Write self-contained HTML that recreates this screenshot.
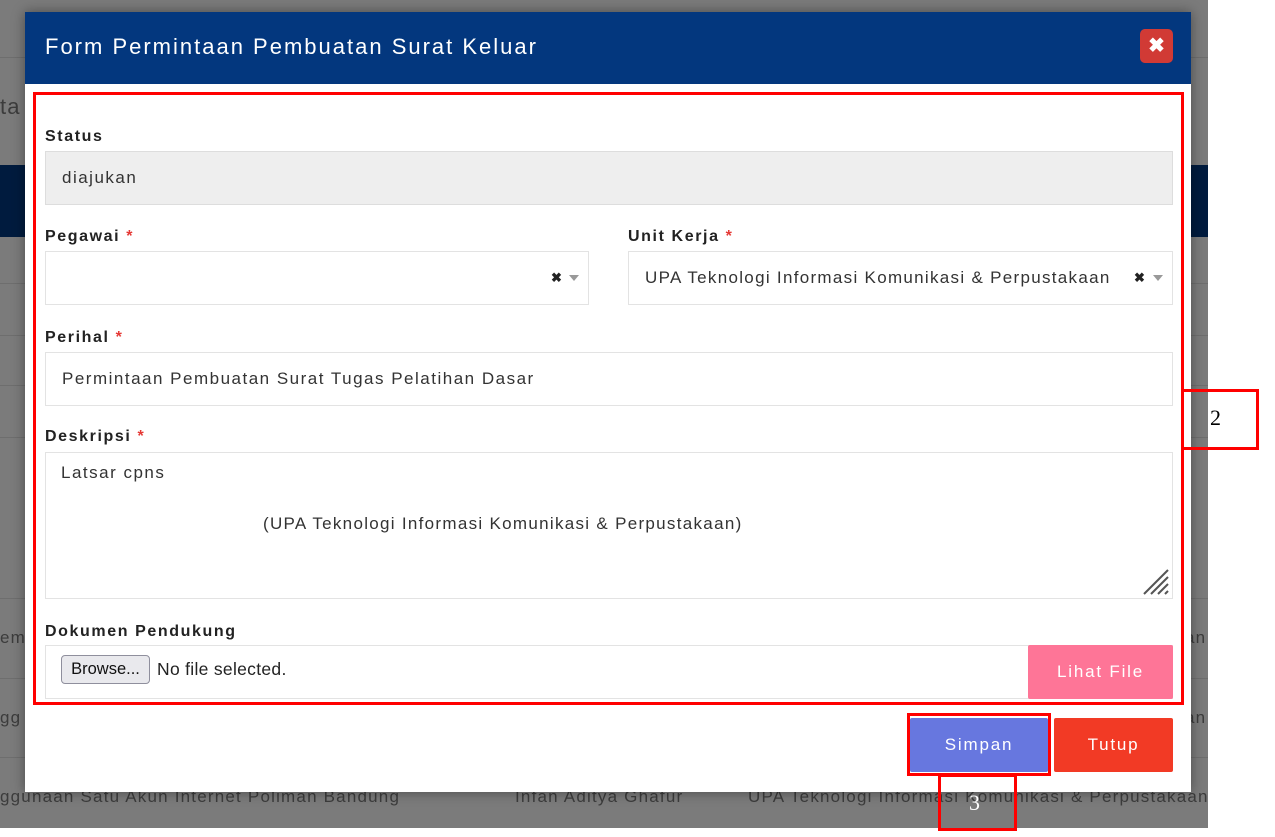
<!DOCTYPE html>
<html><head><meta charset="utf-8"><style>
*{box-sizing:border-box;margin:0;padding:0}
html,body{width:1275px;height:837px;overflow:hidden;background:#7b7b7b}
body{position:relative;font-family:"Liberation Sans",sans-serif}
.a{position:absolute}
.line{left:0;width:1208px;height:1px;background:#6e6e6e}
.bgt{color:#3c3c3c;font-size:17px;letter-spacing:1.2px}
.modal{left:25px;top:12px;width:1166px;height:780px;background:#fff;box-shadow:0 0 12px rgba(0,0,0,.4)}
.hdr{left:25px;top:12px;width:1166px;height:72px;background:#03377e}
.title{left:45px;top:34px;color:#fff;font-size:22px;letter-spacing:2px}
.lbl{font-weight:bold;font-size:16px;color:#222;letter-spacing:1.6px}
.req{color:#e53935}
.inp{border:1px solid #e3e3e3;background:#fff;font-size:17px;letter-spacing:1.5px;color:#333;padding-left:16px;display:flex;align-items:center}
.red{border:3px solid #f00}
.btn{color:#fff;font-size:17px;letter-spacing:1.8px;display:flex;align-items:center;justify-content:center;border-radius:2px}
.x{font-size:13px;font-weight:bold;color:#222}
.car{width:0;height:0;border-left:5px solid transparent;border-right:5px solid transparent;border-top:6px solid #999}
</style></head><body>
<svg class="a" style="left:0;top:0" width="1275" height="837"><rect x="0" y="0" width="1208" height="828" fill="#7b7b7b"/><rect x="1208" y="0" width="67" height="837" fill="#fff"/><rect x="0" y="828" width="1275" height="9" fill="#fff"/><rect x="0" y="165" width="1208" height="72" fill="#001b3e"/></svg>
<div class="a line" style="top:57px"></div>
<div class="a line" style="top:283px"></div>
<div class="a line" style="top:335px"></div>
<div class="a line" style="top:385px"></div>
<div class="a line" style="top:437px"></div>
<div class="a line" style="top:598px"></div>
<div class="a line" style="top:678px"></div>
<div class="a line" style="top:757px"></div>
<div class="a bgt" style="left:0;top:94px;font-size:22px">ta</div>
<div class="a bgt" style="left:0;top:628px">em</div>
<div class="a bgt" style="left:0;top:708px">gg</div>
<div class="a bgt" style="left:1185px;top:628px">an</div>
<div class="a bgt" style="left:1185px;top:708px">an</div>
<div class="a bgt" style="left:0;top:787px">ggunaan Satu Akun Internet Poliman Bandung</div>
<div class="a bgt" style="left:515px;top:787px">Infan Aditya Ghafur</div>
<div class="a bgt" style="left:748px;top:787px">UPA Teknologi Informasi Komunikasi &amp; Perpustakaan</div>

<div class="a modal"></div>
<div class="a hdr"></div>
<div class="a title">Form Permintaan Pembuatan Surat Keluar</div>
<div class="a" style="left:1140px;top:29px;width:33px;height:34px;background:#d13a35;border-radius:5px;color:#fff;font-size:20px;font-weight:bold;text-align:center;line-height:34px">✖</div>

<div class="a lbl" style="left:45px;top:128px">Status</div>
<div class="a inp" style="left:45px;top:151px;width:1128px;height:54px;background:#eee;border-color:#ddd">diajukan</div>

<div class="a lbl" style="left:45px;top:228px">Pegawai <span class="req">*</span></div>
<div class="a inp" style="left:45px;top:251px;width:544px;height:54px"></div>
<div class="a x" style="left:551px;top:270px">✖</div><div class="a car" style="left:569px;top:275px"></div>

<div class="a lbl" style="left:628px;top:228px">Unit Kerja <span class="req">*</span></div>
<div class="a inp" style="left:628px;top:251px;width:545px;height:54px;letter-spacing:1.3px">UPA Teknologi Informasi Komunikasi &amp; Perpustakaan</div>
<div class="a x" style="left:1134px;top:270px">✖</div><div class="a car" style="left:1153px;top:275px"></div>

<div class="a lbl" style="left:45px;top:329px">Perihal <span class="req">*</span></div>
<div class="a inp" style="left:45px;top:352px;width:1128px;height:54px">Permintaan Pembuatan Surat Tugas Pelatihan Dasar</div>

<div class="a lbl" style="left:45px;top:428px">Deskripsi <span class="req">*</span></div>
<div class="a inp" style="left:45px;top:452px;width:1128px;height:147px"></div>
<div class="a" style="left:61px;top:463px;font-size:17px;letter-spacing:1.5px;color:#333">Latsar cpns</div>
<div class="a" style="left:263px;top:514px;font-size:17px;letter-spacing:1.3px;color:#333">(UPA Teknologi Informasi Komunikasi &amp; Perpustakaan)</div>
<svg class="a" style="left:1142px;top:568px" width="28" height="28"><g stroke="#555" stroke-width="2"><line x1="2" y1="26" x2="26" y2="2"/><line x1="9" y1="26" x2="26" y2="9"/><line x1="16" y1="26" x2="26" y2="16"/><line x1="23" y1="26" x2="26" y2="23"/></g></svg>

<div class="a lbl" style="left:45px;top:623px">Dokumen Pendukung</div>
<div class="a inp" style="left:45px;top:645px;width:1128px;height:54px"></div>
<div class="a" style="left:61px;top:655px;width:89px;height:29px;border:1px solid #8f8f9d;border-radius:4px;background:#e9e9ed;font-size:16.5px;text-align:center;line-height:27px;color:#111">Browse...</div>
<div class="a" style="left:157px;top:659px;font-size:17.5px;color:#222;letter-spacing:.3px">No file selected.</div>
<div class="a btn" style="left:1028px;top:645px;width:145px;height:54px;background:#fe7597">Lihat File</div>

<div class="a btn" style="left:910px;top:718px;width:138px;height:54px;background:#6777df">Simpan</div>
<div class="a btn" style="left:1054px;top:718px;width:119px;height:54px;background:#f23a25">Tutup</div>

<div class="a red" style="left:33px;top:92px;width:1151px;height:613px"></div>
<div class="a red" style="left:1181px;top:389px;width:78px;height:61px"></div>
<div class="a" style="left:1210px;top:405px;font-family:'Liberation Serif',serif;font-size:22px">2</div>
<div class="a red" style="left:907px;top:713px;width:144px;height:63px"></div>
<div class="a red" style="left:938px;top:774px;width:79px;height:57px"></div>
<div class="a" style="left:969px;top:790px;font-family:'Liberation Serif',serif;font-size:22px;color:#fff">3</div>
</body></html>
